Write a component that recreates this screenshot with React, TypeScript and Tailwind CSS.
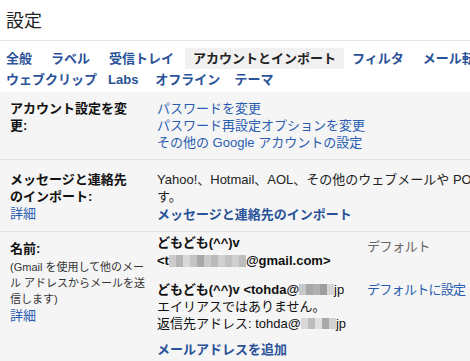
import React from "react";

const FONT = {
  fontFamily: '"Liberation Sans", Arial, "Noto Sans CJK JP", sans-serif',
};

const TABS_1 = ["全般", "ラベル", "受信トレイ", "アカウントとインポート", "フィルタ", "メール転送と POP/IMAP"];
const TABS_2 = [
  { t: "ウェブクリップ", cls: "mr-[11px]" },
  { t: "Labs", cls: "mr-[17px]" },
  { t: "オフライン", cls: "mr-[14px]" },
  { t: "テーマ", cls: "mr-[14px]" },
];

// pixelated blur used to hide parts of addresses
function Mosaic({ shades, h = 12 }: { shades: string[]; h?: number }) {
  return (
    <span className="inline-flex align-middle" style={{ height: h }}>
      {shades.map((c, i) => (
        <span key={i} className="inline-block h-full w-[7px]" style={{ background: c }} />
      ))}
    </span>
  );
}

export default function App() {
  return (
    <div className="h-[361px] w-[470px] overflow-hidden bg-white text-[13px] text-[#222]" style={FONT}>
      <div className="flex h-[41px] items-center border-b border-[#e5e5e5] px-[6px] pt-[2px] text-[18px] text-[#222]">
        設定
      </div>

      <div className="pt-[7px]">
        <div className="flex whitespace-nowrap pl-[6px]">
          {TABS_1.map((t, i) => (
            <span
              key={t}
              className={
                i === 3
                  ? "-ml-[8px] mr-[8px] h-[21px] bg-[#f1f1f1] px-[8px] font-bold leading-[21px] text-[#222]"
                  : "mr-[19px] h-[21px] font-bold leading-[21px] text-[#2a5298]"
              }
            >
              {t}
            </span>
          ))}
        </div>
        <div className="flex whitespace-nowrap pl-[6px]">
          {TABS_2.map((x) => (
            <span key={x.t} className={`${x.cls} h-[21px] font-bold leading-[21px] text-[#2a5298]`}>
              {x.t}
            </span>
          ))}
        </div>
      </div>

      <div className="mt-[2px] bg-[#f5f5f5]">
        {/* account settings */}
        <div className="flex border-b border-[#e2e2e2] pb-[8px] pt-[8px] leading-[17px]">
          <div className="w-[157px] shrink-0 pl-[10px]">
            <div className="w-[124px] font-bold text-[#111]">アカウント設定を変更:</div>
          </div>
          <div className="flex flex-col text-[#2a5db0]">
            <span>パスワードを変更</span>
            <span>パスワード再設定オプションを変更</span>
            <span>その他の Google アカウントの設定</span>
          </div>
        </div>

        {/* import */}
        <div className="flex border-b border-[#e2e2e2] pb-[8px] pt-[11px] leading-[17px]">
          <div className="w-[157px] shrink-0 pl-[10px]">
            <div className="w-[124px] font-bold text-[#111]">メッセージと連絡先のインポート:</div>
            <div className="text-[#2a5db0]">詳細</div>
          </div>
          <div className="flex flex-col">
            <span className="whitespace-nowrap">Yahoo!、Hotmail、AOL、その他のウェブメールや POP3 アカウントからインポートしま</span>
            <span>す。</span>
            <span className="mt-[1px] font-bold text-[#2a5298]">メッセージと連絡先のインポート</span>
          </div>
        </div>

        {/* send mail as */}
        <div className="flex pb-[10px] pt-[2px]">
          <div className="w-[157px] shrink-0 pl-[10px] pt-[6px]">
            <div className="font-bold leading-[17px] text-[#111]">名前:</div>
            <div className="mt-[2px] flex flex-col whitespace-nowrap text-[11px] leading-[16px] text-[#333]">
              <span>(Gmail を使用して他のメー</span>
              <span>ル アドレスからメールを送</span>
              <span>信します)</span>
            </div>
            <div className="leading-[17px] text-[#2a5db0]">詳細</div>
          </div>
          <div className="flex flex-col">
            <div className="flex">
              <div className="w-[210px] font-bold leading-[18px] text-[#111]">
                <div>どもども(^^)v</div>
                <div className="flex items-center whitespace-nowrap">
                  &lt;t
                  <Mosaic shades={["#ccc", "#b5b5b5", "#d8d8d8", "#c4c4c4", "#a9a9a9", "#c9c9c9", "#b9b9b9", "#d0d0d0", "#c1c1c1", "#cfcfcf", "#bdbdbd"]} />
                  @gmail.com&gt;
                </div>
              </div>
              <div className="whitespace-nowrap pt-[4px] leading-[18px] tracking-[-0.4px] text-[#666]">デフォルト</div>
            </div>
            <div className="mt-[11px] flex">
              <div className="w-[210px] leading-[17px] text-[#111]">
                <div className="flex items-center whitespace-nowrap font-bold">
                  どもども(^^)v &lt;tohda@
                  <Mosaic shades={["#c8c8c8", "#a8a8a8", "#b0b0b0", "#9e9e9e", "#d6d6d6"]} h={11} />
                  <span className="font-normal">jp</span>
                </div>
                <div>エイリアスではありません。</div>
                <div className="flex items-center whitespace-nowrap">
                  返信先アドレス: tohda@
                  <Mosaic shades={["#d8d8d8", "#bdbdbd", "#e0e0e0", "#a9a9a9", "#d2d2d2"]} h={11} />
                  jp
                </div>
              </div>
              <div className="whitespace-nowrap leading-[17px] tracking-[-0.7px] text-[#2a5db0]">デフォルトに設定</div>
            </div>
            <div className="mt-[9px] font-bold leading-[17px] text-[#2a5298]">メールアドレスを追加</div>
          </div>
        </div>
      </div>
    </div>
  );
}
